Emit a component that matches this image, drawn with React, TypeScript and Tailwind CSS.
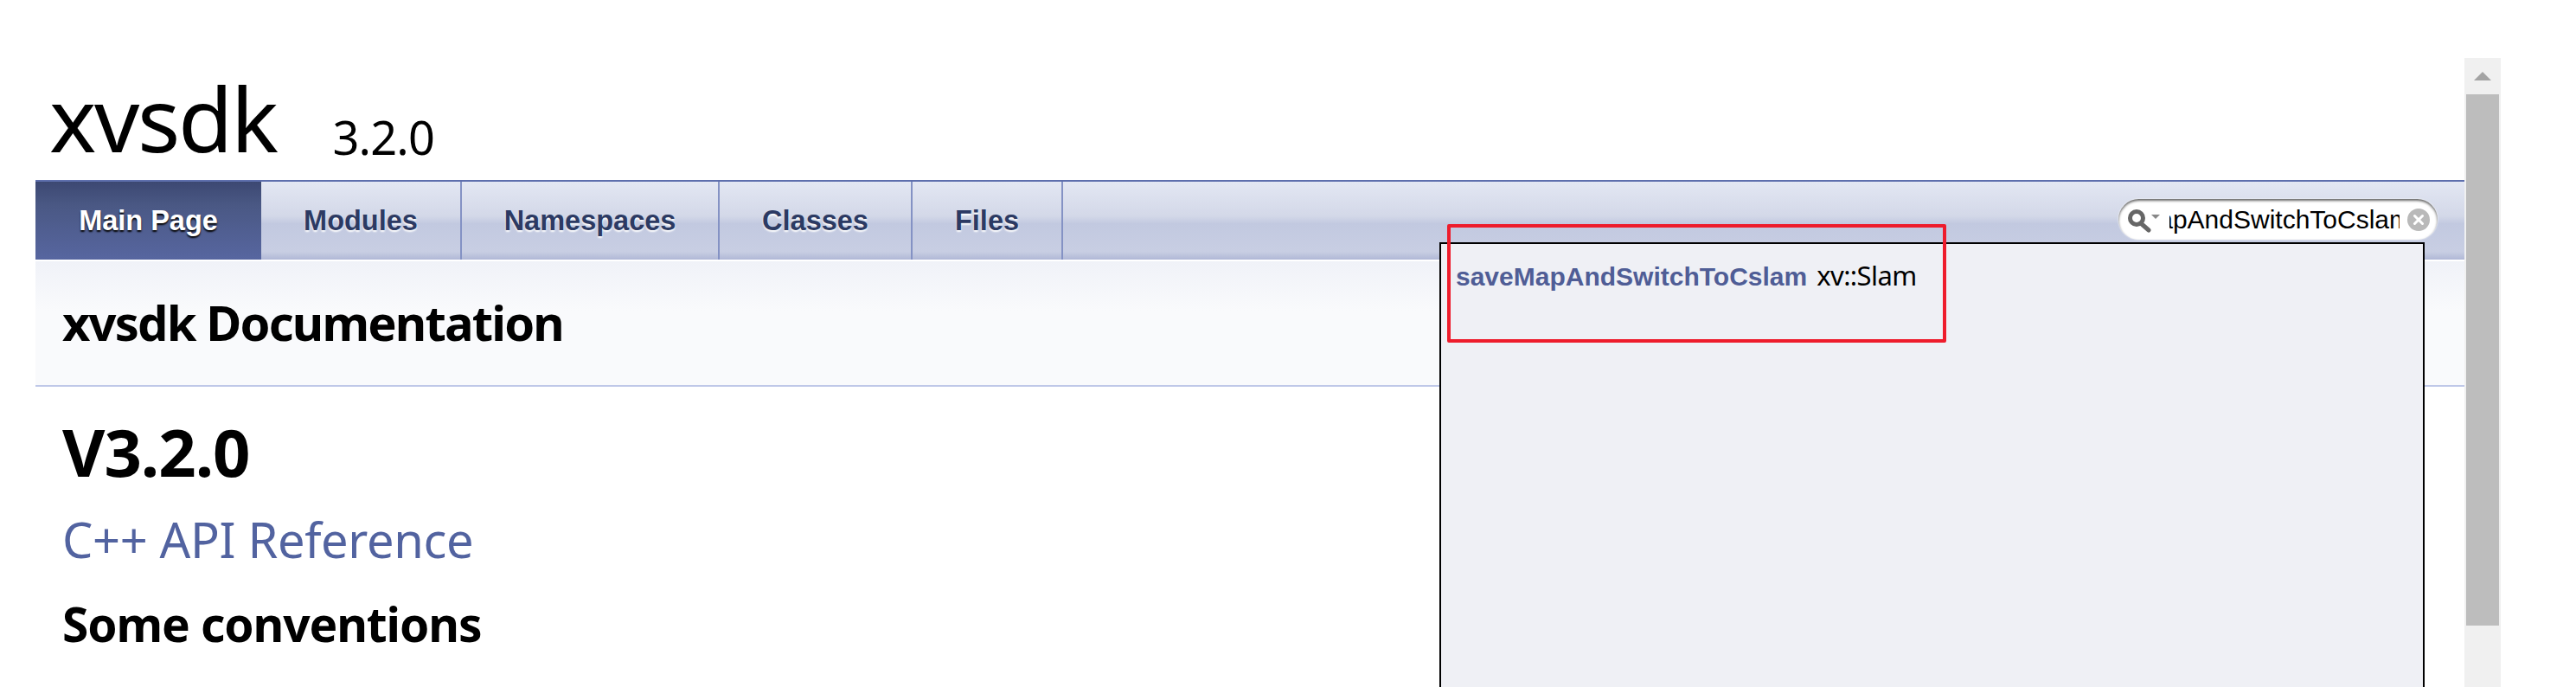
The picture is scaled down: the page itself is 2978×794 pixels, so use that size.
import { X } from "lucide-react"

const tabs = [
    { label: "Main Page", width: "w-[261px]", active: true },
    { label: "Modules", width: "w-[232px]" },
    { label: "Namespaces", width: "w-[298px]" },
    { label: "Classes", width: "w-[223px]" },
    { label: "Files", width: "w-[174px]" },
]

function NavTab({ label, width, active }: { label: string; width: string; active?: boolean }) {
    if (active) {
        return (
            <div className={`${width} flex items-center justify-center bg-[linear-gradient(#3c4872,#4a5884_30%,#5766a0)] text-[32.5px] font-bold text-white [text-shadow:0_2px_2px_#000]`}>
                {label}
            </div>
        )
    }
    return (
        <div className={`${width} flex items-center justify-center border-r-2 border-[#8492c4] text-[32.5px] font-bold text-[#2c3a63] [text-shadow:0_2px_2px_#fff]`}>
            {label}
        </div>
    )
}

function SearchBox() {
    return (
        <div className="mr-[31px] mt-[20px] flex h-[47px] w-[369px] items-center rounded-full bg-white pl-[8px] shadow-[inset_0_2px_3px_#666,0_0_2px_#fff]">
            <svg width="44" height="36" viewBox="0 0 44 36" className="shrink-0 blur-[0.6px]">
                <circle cx="13" cy="16" r="7.5" fill="none" stroke="#666" strokeWidth="5" />
                <path d="M19 23 L27 30" stroke="#666" strokeWidth="5" strokeLinecap="round" />
                <path d="M30 12 H40 L35 17 Z" fill="#888" />
            </svg>
            <div className="ml-[7px] w-[266px] shrink-0 overflow-hidden text-[30px] leading-[40px] text-black">
                <div className="mr-[-13px] flex justify-end whitespace-nowrap">saveMapAndSwitchToCslam</div>
            </div>
            <div className="ml-[9px] flex h-[26px] w-[26px] items-center justify-center rounded-full bg-[#b9b9b9] text-white">
                <X size={18} strokeWidth={4} />
            </div>
        </div>
    )
}

export default function App() {
    return (
        <div className="relative flex h-[794px] w-[2978px] overflow-hidden bg-white font-['Noto_Sans',sans-serif] text-black">
            <main className="ml-[41px] w-[2808px] shrink-0">
                {/* tiêu đề */}
                <div className="flex h-[208px] items-end pb-[7px] pl-[16px]">
                    <span className="text-[103px] leading-[130px] tracking-[-2.4px]">xvsdk</span>
                    <span className="mb-[13px] ml-[65px] text-[54px] leading-[60px] tracking-[-0.8px]">3.2.0</span>
                </div>

                {/* thanh điều hướng */}
                <nav className="flex h-[92px] border-t-2 border-[#5e6fad] bg-[linear-gradient(#e3e7f3,#d3d8e8_44%,#c2c9e0_54%,#c8cee3_90%,#b0b8d6)] font-['Liberation_Sans',sans-serif]">
                    {tabs.map((tab) => (
                        <NavTab key={tab.label} {...tab} />
                    ))}
                    <div className="ml-auto">
                        <SearchBox />
                    </div>
                </nav>

                {/* tiêu đề trang */}
                <div className="mt-[2px] flex h-[145px] items-center border-b-2 border-[#bfc8e8] bg-[linear-gradient(#f0f2f8,#f9fafc_40%)] pb-[4px] pl-[31px]">
                    <h1 className="text-[56px] font-bold tracking-[-1.8px]">xvsdk Documentation</h1>
                </div>

                <div className="pl-[31px]">
                    <h1 className="mt-[25px] text-[76px] leading-[100px] font-bold tracking-[-1px]">V3.2.0</h1>
                    <p className="mt-[13px] text-[56px] leading-[76px] tracking-[-0.35px] text-[#5263a0]">C++ API Reference</p>
                    <h2 className="mt-[22px] text-[55px] leading-[76px] font-bold tracking-[-1.1px]">Some conventions</h2>
                </div>
            </main>

            {/* thanh cuộn */}
            <div className="flex h-[727px] w-[42px] shrink-0 flex-col self-end bg-[#f0f0f0]">
                <div className="flex h-[42px] items-center justify-center">
                    <svg width="20" height="10" viewBox="0 0 20 10">
                        <path d="M10 0 L20 10 H0 Z" fill="#a3a3a3" />
                    </svg>
                </div>
                <div className="mx-[2px] h-[614px] bg-[#bdbdbd]" />
            </div>

            {/* kết quả tìm kiếm */}
            <div className="absolute left-[1664px] top-[280px] h-[530px] w-[1139px] border-2 border-black bg-[#eff0f5] pl-[17px] pt-[13px]">
                <div className="flex items-baseline whitespace-nowrap">
                    <span className="font-['Liberation_Sans',sans-serif] text-[30px] font-bold text-[#4f5d96]">saveMapAndSwitchToCslam</span>
                    <span className="ml-[11px] text-[31px] tracking-[-0.6px]">xv::Slam</span>
                </div>
            </div>

            {/* khung đỏ chú thích */}
            <div className="absolute left-[1673px] top-[259px] h-[137px] w-[577px] rounded-[2px] border-[4px] border-[#ee1c2c]" />
        </div>
    )
}
